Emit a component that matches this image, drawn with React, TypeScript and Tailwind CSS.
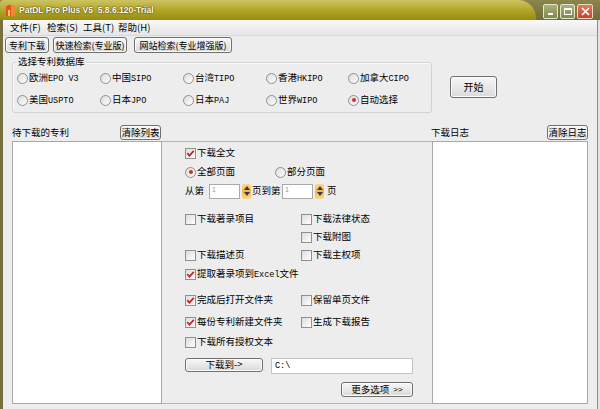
import React from "react";

function Check({ checked }: { checked?: boolean }) {
  return (
    <span className="inline-flex w-[11px] h-[11px] shrink-0 items-center justify-center border border-[#8e8f8f] bg-gradient-to-br from-[#dcdcdc] to-white">
      {checked && (
        <svg width="9" height="9" viewBox="0 0 9 9">
          <path d="M1.3 4.2 L3.4 6.6 L7.8 1.8" stroke="#c4262a" strokeWidth="1.8" fill="none" />
        </svg>
      )}
    </span>
  );
}

function Radio({ checked }: { checked?: boolean }) {
  return (
    <span className="inline-flex w-[11px] h-[11px] shrink-0 items-center justify-center rounded-full border border-[#8e8f8f] bg-gradient-to-br from-[#dcdcdc] to-white">
      {checked && <span className="w-[4px] h-[4px] rounded-full bg-[#d22f2a]" />}
    </span>
  );
}

function Lat({ children }: { children: React.ReactNode }) {
  return <span className="font-['Liberation_Mono',monospace] text-[8.5px] whitespace-pre">{children}</span>;
}

function RadioItem({ cjk, lat, checked }: { cjk: string; lat?: string; checked?: boolean }) {
  return (
    <div className="flex items-center h-[14px] whitespace-nowrap">
      <Radio checked={checked} />
      <span className="ml-[1px]">
        {cjk}
        {lat && <Lat>{lat}</Lat>}
      </span>
    </div>
  );
}

function CheckItem({ label, checked }: { label: React.ReactNode; checked?: boolean }) {
  return (
    <div className="flex items-center h-[18px] whitespace-nowrap">
      <Check checked={checked} />
      <span className="ml-[1px]">{label}</span>
    </div>
  );
}

function Btn({ className, children }: { className: string; children: React.ReactNode }) {
  return (
    <div
      className={
        "flex items-center justify-center whitespace-nowrap border border-[#707070] rounded-[3px] bg-gradient-to-b from-[#f7f7f7] to-[#dadada] shadow-[inset_0_0_0_1px_#fafafa] " +
        className
      }
    >
      {children}
    </div>
  );
}

function Spin() {
  return (
    <div className="w-[9px] h-[15px] ml-[2px] rounded-[2px] bg-gradient-to-b from-[#fbd88a] via-[#f3b54a] to-[#fbd88a] flex flex-col items-center justify-center gap-[2px]">
      <svg width="6" height="4" viewBox="0 0 6 4">
        <path d="M0 4 L3 0 L6 4 Z" fill="#3a3a3a" />
      </svg>
      <svg width="6" height="4" viewBox="0 0 6 4">
        <path d="M0 0 L3 4 L6 0 Z" fill="#3a3a3a" />
      </svg>
    </div>
  );
}

function NumBox() {
  return (
    <div className="w-[31px] h-[15px] border border-[#a9a9a9] bg-white relative">
      <span className="absolute left-[2px] top-[1px] text-[7px] text-[#9a9a9a] font-['Liberation_Sans',sans-serif]">1</span>
    </div>
  );
}

function Logo() {
  return (
    <svg width="14" height="14" viewBox="0 0 14 14">
      <path d="M3 13 L3 5 Q3 2 6 2 L8 2 L8 13 Z" fill="#e0532a" />
      <path d="M8 13 L8 4 Q10 1 12 3 L12 13 Z" fill="#f08a2a" />
      <path d="M5 13 L5 7 L7 7 L7 13 Z" fill="#f7c24a" />
    </svg>
  );
}

export default function App() {
  return (
    <div className="w-[600px] h-[409px] flex flex-col overflow-hidden bg-[#77713f] font-['Noto_Sans_CJK_SC','Noto_Sans',sans-serif] text-[9.5px] leading-none text-black">
      {/* title bar */}
      <div className="h-[20px] shrink-0 flex bg-gradient-to-b from-[#8a864c] to-[#716d38]">
        <div className="w-[536px] h-full rounded-tl-[4px] rounded-tr-[18px] bg-gradient-to-b from-[#cdc362] via-[#b3a728] to-[#978c10] flex items-center pl-[3px]">
          <Logo />
          <span className="ml-[2px] font-['Liberation_Sans',sans-serif] font-bold text-[8.5px] text-[#fffdf0] [text-shadow:0_0_2px_#4a4306,0_0_1px_#4a4306]">
            PatDL Pro Plus V5&nbsp;&nbsp;5.8.6.120-Trial
          </span>
        </div>
        <div className="flex-1 flex items-start pt-[4px] pl-[7px] gap-[2px]">
          <div className="w-[15px] h-[15px] border border-[#e4e8cf] rounded-[2px] bg-gradient-to-b from-[#a9b27a] to-[#7f8a4c] flex items-end justify-center pb-[3px]">
            <span className="w-[5px] h-[2px] bg-white" />
          </div>
          <div className="w-[15px] h-[15px] border border-[#e4e8cf] rounded-[2px] bg-gradient-to-b from-[#a9b27a] to-[#7f8a4c] flex items-center justify-center">
            <span className="w-[8px] h-[7px] border border-white border-t-2" />
          </div>
          <div className="w-[16px] h-[15px] border border-[#f1d7c8] rounded-[2px] bg-gradient-to-b from-[#e27a5a] to-[#c2432a] flex items-center justify-center">
            <svg width="9" height="9" viewBox="0 0 9 9">
              <path d="M1 1 L8 8 M8 1 L1 8" stroke="white" strokeWidth="1.7" />
            </svg>
          </div>
        </div>
      </div>

      {/* body row */}
      <div className="flex-1 flex">
        <div className="w-[3px]" />
        <div className="w-[594px] h-full bg-[#ededed] flex flex-col">
          {/* menu */}
          <div className="h-[16px] shrink-0 flex items-center pl-[7px] bg-gradient-to-b from-[#f8f8f8] to-[#e6e6e6] border-b border-[#d9d9d9] whitespace-nowrap">
            <span className="w-[37px]">文件(F)</span>
            <span className="w-[36px]">检索(S)</span>
            <span className="w-[35px]">工具(T)</span>
            <span>帮助(H)</span>
          </div>
          {/* tabs */}
          <div className="h-[16px] mt-[1px] flex pl-[2px] text-[9px]">
            <Btn className="w-[44px] h-[16px] rounded-[2px] from-[#e9e9e9] to-[#d2d2d2]">专利下载</Btn>
            <Btn className="w-[74px] h-[16px] ml-[4px] rounded-[2px]">快速检索(专业版)</Btn>
            <Btn className="w-[98px] h-[16px] ml-[7px] rounded-[2px]">网站检索(专业增强版)</Btn>
          </div>
          {/* database group */}
          <div className="flex items-start mt-[9px]">
            <div className="relative ml-[9px] w-[420px] h-[51px] border border-[#d3d3d3] rounded-[3px] shadow-[inset_1px_1px_0_#fbfbfb]">
              <span className="absolute left-[4px] -top-[6px] px-[1px] bg-[#ededed]">选择专利数据库</span>
              <div className="pt-[8px] pl-[4px] grid grid-cols-[83px_83px_83px_82px_auto] gap-y-[8px]">
                <RadioItem cjk="欧洲" lat="EPO V3" />
                <RadioItem cjk="中国" lat="SIPO" />
                <RadioItem cjk="台湾" lat="TIPO" />
                <RadioItem cjk="香港" lat="HKIPO" />
                <RadioItem cjk="加拿大" lat="CIPO" />
                <RadioItem cjk="美国" lat="USPTO" />
                <RadioItem cjk="日本" lat="JPO" />
                <RadioItem cjk="日本" lat="PAJ" />
                <RadioItem cjk="世界" lat="WIPO" />
                <RadioItem cjk="自动选择" checked />
              </div>
            </div>
            <Btn className="ml-[18px] mt-[14px] w-[47px] h-[22px] text-[10px]">开始</Btn>
          </div>

          {/* panels */}
          <div className="mt-[11px] ml-[9px] flex">
            {/* left list */}
            <div className="w-[150px] flex flex-col">
              <div className="h-[17px] flex items-center justify-between">
                <span className="mt-[1px]">待下载的专利</span>
                <Btn className="w-[41px] h-[15px] mr-[1px] rounded-[2px]">清除列表</Btn>
              </div>
              <div className="h-[263px] bg-white border border-[#a8a8a8]" />
            </div>
            {/* middle options */}
            <div className="w-[270px] flex flex-col">
              <div className="h-[17px]" />
              <div className="h-[263px] border-y border-[#b5b5b5] pl-[23px] pt-[2px] flex flex-col">
                <CheckItem label="下载全文" checked />
                <div className="flex h-[18px] mt-[1px]">
                  <div className="w-[90px] flex items-center">
                    <Radio checked />
                    <span className="ml-[1px]">全部页面</span>
                  </div>
                  <div className="flex items-center">
                    <Radio />
                    <span className="ml-[1px]">部分页面</span>
                  </div>
                </div>
                <div className="flex items-center h-[18px] mt-[1px]">
                  <span className="w-[24px]">从第</span>
                  <NumBox />
                  <Spin />
                  <span className="w-[30px] ml-[1px]">页到第</span>
                  <NumBox />
                  <Spin />
                  <span className="ml-[3px]">页</span>
                </div>
                <div className="grid grid-cols-[116px_auto] mt-[10px]">
                  <CheckItem label="下载著录项目" />
                  <CheckItem label="下载法律状态" />
                  <div />
                  <CheckItem label="下载附图" />
                  <CheckItem label="下载描述页" />
                  <CheckItem label="下载主权项" />
                </div>
                <div className="mt-[1px]">
                  <CheckItem label={<>提取著录项到<Lat>Excel</Lat>文件</>} checked />
                </div>
                <div className="grid grid-cols-[116px_auto] mt-[8px] gap-y-[4px]">
                  <CheckItem label="完成后打开文件夹" checked />
                  <CheckItem label="保留单页文件" />
                  <CheckItem label="每份专利新建文件夹" checked />
                  <CheckItem label="生成下载报告" />
                </div>
                <div className="mt-[2px]">
                  <CheckItem label="下载所有授权文本" />
                </div>
                <div className="flex items-start mt-[7px] h-[16px]">
                  <Btn className="w-[78px] h-[14px] rounded-[2px]">下载到-&gt;</Btn>
                  <div className="ml-[8px] w-[142px] h-[16px] bg-white border border-[#c4c4c4] flex items-center pl-[3px]">
                    <Lat>C:\</Lat>
                  </div>
                </div>
                <Btn className="mt-[8px] ml-[156px] w-[72px] h-[15px] rounded-[2px]">
                  <span>更多选项</span>
                  <span className="ml-[4px] font-['Liberation_Sans',sans-serif] text-[8px]">&gt;&gt;</span>
                </Btn>
              </div>
            </div>
            {/* log */}
            <div className="w-[156px] flex flex-col">
              <div className="h-[17px] flex items-center justify-between">
                <span className="mt-[1px] -ml-[1px]">下载日志</span>
                <Btn className="w-[41px] h-[15px] rounded-[2px]">清除日志</Btn>
              </div>
              <div className="h-[263px] bg-white border border-[#a8a8a8]" />
            </div>
          </div>
        </div>
        <div className="w-[1px] bg-[#8d8d84]" />
        <div className="w-[2px] bg-[#e4e4de]" />
      </div>
    </div>
  );
}
